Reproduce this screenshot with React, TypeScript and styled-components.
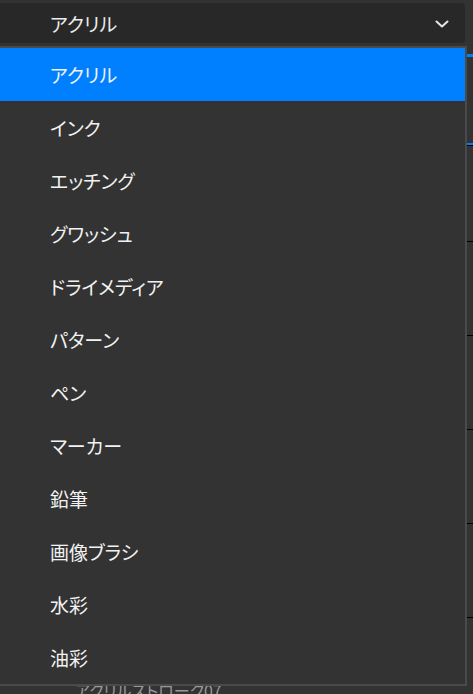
import styled, { createGlobalStyle } from "styled-components";

const GlobalStyle = createGlobalStyle`
  html, body {
    margin: 0;
    padding: 0;
    background: #333333;
    overflow: hidden;
  }
  body {
    font-family: "Noto Sans CJK JP", "Noto Sans", sans-serif;
  }
`;

const Page = styled.div`
  position: relative;
  width: 473px;
  height: 694px;
  padding-top: 3px;
  box-sizing: border-box;
  overflow: hidden;
`;

const SelectBox = styled.div`
  width: 465px;
  height: 40px;
  background: #282828;
  border-radius: 0 4px 4px 0;
  display: flex;
  align-items: center;
  justify-content: space-between;
  padding: 0 16px 0 50px;
  box-sizing: border-box;
  color: #ececec;
  font-size: 19px;
  font-feature-settings: "palt";
`;

const Chevron = styled.svg`
  width: 14px;
  height: 8px;
  margin-top: 1px;
`;

const Backdrop = styled.div`
  margin-top: 11px;
`;

const TabLine = styled.div`
  height: 3px;
  background: #0080ff;
`;

const HeaderRow = styled.div`
  height: 89px;
  box-shadow: inset 0 -1px 0 #000, inset 0 -3px 0 #0080ff;
`;

const BrushRow = styled.div<{ $first?: boolean }>`
  height: ${(p) => (p.$first ? 96 : 94)}px;
  border-bottom: 1px solid #000;
  box-sizing: border-box;
`;

const BrushName = styled.div`
  padding: 60px 0 0 75px;
  color: #9a9a9a;
  font-size: 16px;
  font-feature-settings: "palt";
`;

const Menu = styled.ul`
  position: absolute;
  top: 46px;
  left: -2px;
  width: 469px;
  margin: 0;
  padding: 0;
  list-style: none;
  background: #333333;
  border: 2px solid #4a4a4a;
  box-sizing: border-box;
`;

const Item = styled.li<{ $active?: boolean }>`
  height: 53px;
  display: flex;
  align-items: center;
  padding-left: 50px;
  background: ${(p) => (p.$active ? "#0080ff" : "transparent")};
  color: #f2f2f2;
  font-size: 19px;
  font-feature-settings: "palt";
`;

const categories = [
  "アクリル",
  "インク",
  "エッチング",
  "グワッシュ",
  "ドライメディア",
  "パターン",
  "ペン",
  "マーカー",
  "鉛筆",
  "画像ブラシ",
  "水彩",
  "油彩",
];

const App = () => {
  const selected = "アクリル";
  return (
    <Page>
      <GlobalStyle />
      <SelectBox>
        <span>{selected}</span>
        <Chevron viewBox="0 0 14 8">
          <path
            d="M1.5 1.5 L7 6.5 L12.5 1.5"
            fill="none"
            stroke="#e6e6e6"
            strokeWidth="2"
            strokeLinecap="round"
            strokeLinejoin="round"
          />
        </Chevron>
      </SelectBox>
      <Backdrop>
        <TabLine />
        <HeaderRow />
        {[0, 1, 2, 3, 4].map((i) => (
          <BrushRow key={i} $first={i === 0} />
        ))}
        <BrushName>アクリルストローク07</BrushName>
      </Backdrop>
      <Menu>
        {categories.map((c) => (
          <Item key={c} $active={c === selected}>
            {c}
          </Item>
        ))}
      </Menu>
    </Page>
  );
};

export default App;
